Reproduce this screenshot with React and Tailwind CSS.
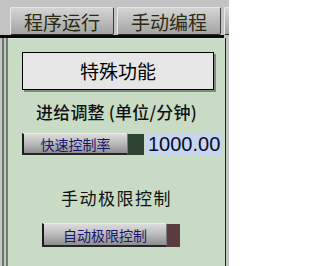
const cjk = { fontFamily: '"Noto Sans CJK SC", "Noto Sans", sans-serif' }

const Tab = ({ label, w }) => (
  <div
    className={`${w} h-[28px] shrink-0 flex items-center justify-center rounded-[2px] border border-[#e8e8e8] border-r-[#3a3a3a] border-b-[#2a2a2a] bg-gradient-to-b from-[#d4d4d4] to-[#a4a4a4] text-[19px] leading-none text-[#2b2b14]`}
    style={cjk}
  >
    {label}
  </div>
)

const PushButton = ({ label, w, h }) => (
  <div
    className={`${w} ${h} flex items-center justify-center border-l-2 border-b-2 border-l-[#1a1a1a] border-b-[#262626] border-t border-t-[#ececec] border-r border-r-[#7a7a7a] bg-gradient-to-b from-[#dcdcdc] via-[#bababa] to-[#8e8e8e] text-[14px] leading-none text-[#16166e]`}
    style={cjk}
  >
    {label}
  </div>
)

export default function App() {
  return (
    <div className="w-[229px] h-[266px] overflow-hidden bg-[#c3c3c3] flex flex-col" style={cjk}>
      <div className="flex gap-[3px] pl-[10px] pt-[7px]">
        <Tab label="程序运行" w="w-[104px]" />
        <Tab label="手动编程" w="w-[104px]" />
        <Tab label="" w="w-[40px]" />
      </div>
      <div className="h-[3px] bg-[#0a0a0a] w-[224px]" />
      <div className="flex flex-1">
        <div className="flex shrink-0">
          <div className="w-[2px] bg-[#c6c6c6]" />
          <div className="w-[2px] bg-[#6b776b]" />
          <div className="w-[2px] bg-[#c2c9c2]" />
          <div className="w-[2px] bg-[#6f7f6f]" />
        </div>
        <div className="flex-1 bg-[#c7dbc5] flex flex-col items-center border-t border-t-[#d6e6d4]">
          <div className="mt-[13px] ml-[14px] self-start w-[192px] h-[38px] border border-black bg-[#e6e6e6] shadow-[2px_2px_0_#7f8a7f] flex items-center justify-center text-[19px] text-black">
            特殊功能
          </div>
          <div className="mt-[13px] text-[17px] leading-none text-[#111] font-medium tracking-[0.2px]">
            进给调整 (单位/分钟)
          </div>
          <div className="mt-[13px] self-start ml-[14px] flex items-center">
            <PushButton label="快速控制率" w="w-[106px]" h="h-[22px]" />
            <div className="w-[16px] h-[21px] bg-[#2d4433]" />
            <div
              className="ml-[2px] h-[21px] px-[2px] bg-[#c5d6ee] text-[20px] leading-none flex items-center text-[#0a0a28]"
              style={{ fontFamily: '"Liberation Sans", Arial, sans-serif' }}
            >
              1000.00
            </div>
          </div>
          <div className="mt-[34px] text-[17px] leading-none text-[#111] tracking-[1.5px]">
            手动极限控制
          </div>
          <div className="mt-[17px] self-start ml-[34px] flex items-center">
            <PushButton label="自动极限控制" w="w-[125px]" h="h-[24px]" />
            <div className="w-[13px] h-[23px] bg-[#5a3c3e]" />
          </div>
        </div>
        <div className="w-[1px] bg-[#1a261a]" />
        <div className="w-[3px] bg-[#c3c3c3]" />
      </div>
    </div>
  )
}
